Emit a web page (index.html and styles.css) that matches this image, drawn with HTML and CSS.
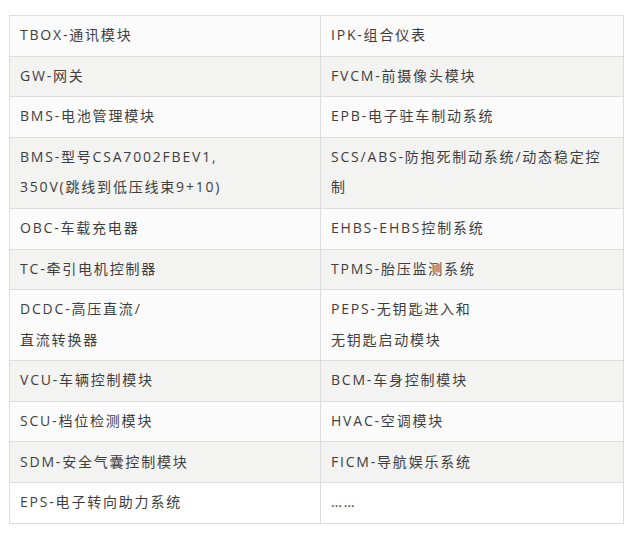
FILE: index.html
```html
<!DOCTYPE html>
<html>
<head>
<meta charset="utf-8">
<link rel="stylesheet" href="styles.css">
</head>
<body>
<table class="ecu">
  <colgroup><col class="c1"><col class="c2"></colgroup>
  <tr class="odd"><td>TBOX-通讯模块</td><td>IPK-组合仪表</td></tr>
  <tr class="even"><td>GW-网关</td><td>FVCM-前摄像头模块</td></tr>
  <tr class="odd"><td>BMS-电池管理模块</td><td>EPB-电子驻车制动系统</td></tr>
  <tr class="even"><td>BMS-型号CSA7002FBEV1,<br>350V(跳线到低压线束9+10)</td><td>SCS/ABS-防抱死制动系统/动态稳定控制</td></tr>
  <tr class="odd"><td>OBC-车载充电器</td><td>EHBS-EHBS控制系统</td></tr>
  <tr class="even"><td>TC-牵引电机控制器</td><td>TPMS-胎压监测系统</td></tr>
  <tr class="odd"><td>DCDC-高压直流/<br>直流转换器</td><td>PEPS-无钥匙进入和<br>无钥匙启动模块</td></tr>
  <tr class="even"><td>VCU-车辆控制模块</td><td>BCM-车身控制模块</td></tr>
  <tr class="odd"><td>SCU-档位检测模块</td><td>HVAC-空调模块</td></tr>
  <tr class="even"><td>SDM-安全气囊控制模块</td><td>FICM-导航娱乐系统</td></tr>
  <tr class="last"><td>EPS-电子转向助力系统</td><td>……</td></tr>
</table>
</body>
</html>
```
FILE: styles.css
```css
html, body {
  margin: 0;
  padding: 0;
  background: #ffffff;
}
body {
  padding: 15px 0 0 9px;
}
.ecu {
  border-collapse: collapse;
  table-layout: fixed;
  width: 614px;
  font-family: "Open Sans", "Noto Sans CJK SC", sans-serif;
  font-size: 14px;
  letter-spacing: 1.8px;
  color: #3e3e3e;
}
.c1 { width: 311px; }
.c2 { width: 303px; }
.ecu td {
  border: 1px solid #dddddd;
  padding: 4.2px 10px 5.14px;
  line-height: 30.33px;
  vertical-align: top;
  word-break: break-all;
}
.odd { background: #fbfbfb; }
.even { background: #f3f3f1; }
.last { background: #ffffff; }
```
